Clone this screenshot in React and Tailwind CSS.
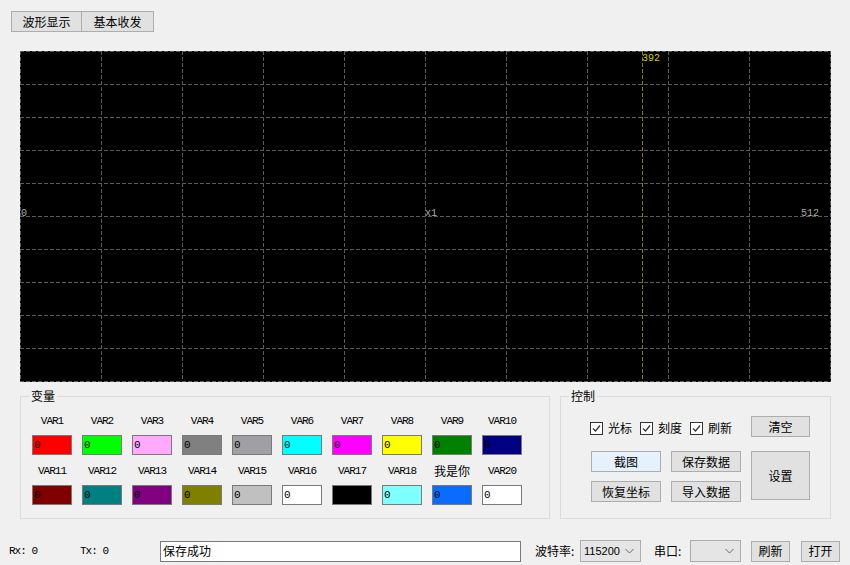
import React from 'react';

const CJK = "font-['Segoe_UI','Noto_Sans_CJK_SC',sans-serif]";
const MONO = "font-['Liberation_Mono','Noto_Sans_CJK_SC',monospace]";

const VARS = [
  [
    { label: 'VAR1', color: 'bg-[#ff0000]' },
    { label: 'VAR2', color: 'bg-[#00ff00]' },
    { label: 'VAR3', color: 'bg-[#ffaaff]' },
    { label: 'VAR4', color: 'bg-[#808080]' },
    { label: 'VAR5', color: 'bg-[#a0a0a4]' },
    { label: 'VAR6', color: 'bg-[#00ffff]' },
    { label: 'VAR7', color: 'bg-[#ff00ff]' },
    { label: 'VAR8', color: 'bg-[#ffff00]' },
    { label: 'VAR9', color: 'bg-[#008000]' },
    { label: 'VAR10', color: 'bg-[#000080]' },
  ],
  [
    { label: 'VAR11', color: 'bg-[#800000]' },
    { label: 'VAR12', color: 'bg-[#008080]' },
    { label: 'VAR13', color: 'bg-[#800080]' },
    { label: 'VAR14', color: 'bg-[#808000]' },
    { label: 'VAR15', color: 'bg-[#c0c0c0]' },
    { label: 'VAR16', color: 'bg-white' },
    { label: 'VAR17', color: 'bg-black' },
    { label: 'VAR18', color: 'bg-[#80ffff]' },
    { label: '我是你', color: 'bg-[#0a6cff]', cjk: true },
    { label: 'VAR20', color: 'bg-white' },
  ],
];

const Grid = () => {
  const xs = Array.from({ length: 11 }, (_, i) => 0.5 + i * 81);
  const ys = Array.from({ length: 11 }, (_, i) => 0.5 + i * 33);
  return (
    <svg width="811" height="331" className="block">
      {xs.map((x) => (
        <line key={'x' + x} x1={x} y1="0" x2={x} y2="331" stroke="#5a5a5a" strokeDasharray="4 2" />
      ))}
      {ys.map((y) => (
        <line key={'y' + y} x1="0" y1={y} x2="811" y2={y} stroke="#5a5a5a" strokeDasharray="4 2" />
      ))}
      <line x1="622.5" y1="0" x2="622.5" y2="331" stroke="#808000" strokeDasharray="4 2" />
      <g fontFamily="Liberation Mono, monospace" fontSize="10">
        <text x="1" y="165" fill="#a8a8a8">0</text>
        <text x="405" y="165" fill="#a8a8a8">x1</text>
        <text x="781" y="165" fill="#a8a8a8">512</text>
        <text x="622" y="10" fill="#d0d000">392</text>
      </g>
    </svg>
  );
};

const Btn = ({ children, className = '' }) => (
  <button className={`h-[21px] bg-[#e1e1e1] border border-[#adadad] text-[12px] text-black flex items-center justify-center ${CJK} ${className}`}>
    {children}
  </button>
);

const Check = ({ label }) => (
  <label className="flex items-center gap-[5px] mr-[8px]">
    <svg width="13" height="13" className="block">
      <rect x="0.5" y="0.5" width="12" height="12" fill="#fff" stroke="#333" />
      <path d="M3 6.5 L5.5 9 L10 3.5" fill="none" stroke="#333" strokeWidth="1.2" />
    </svg>
    <span className="text-[12px]">{label}</span>
  </label>
);

const Chevron = () => (
  <svg width="9" height="6" className="block shrink-0">
    <path d="M0.5 1 L4.5 5 L8.5 1" fill="none" stroke="#666" />
  </svg>
);

const Select = ({ value, className = '' }) => (
  <div className={`h-[22px] bg-[#e5e5e5] border border-[#adadad] flex items-center justify-between pl-[3px] pr-[6px] ${className}`}>
    <span className="font-['Liberation_Sans',sans-serif] text-[11px]">{value}</span>
    <Chevron />
  </div>
);

export default function App() {
  return (
    <div className={`w-[850px] h-[565px] bg-[#f0f0f0] overflow-hidden text-black ${CJK}`}>
      {/* Tabs */}
      <div className="flex pt-[11px] pl-[11px]">
        <div className="w-[71px] h-[21px] bg-[#e1e1e1] border border-[#adadad] flex items-center justify-center text-[12px]">波形显示</div>
        <div className="w-[72px] h-[21px] bg-[#e1e1e1] border border-l-0 border-[#adadad] flex items-center justify-center text-[12px]">基本收发</div>
      </div>

      {/* Scope */}
      <div className="mt-[19px] ml-[20px] w-[811px] h-[331px] bg-black">
        <Grid />
      </div>

      {/* Groups */}
      <div className="flex mt-[14px] ml-[20px] gap-[10px]">
        <div className="relative w-[530px] h-[123px] border border-[#dcdcdc] pt-[17px] pl-[6px]">
          <span className="absolute left-[8px] -top-[9px] px-[2px] bg-[#f0f0f0] text-[12px] leading-[16px]">变量</span>
          {VARS.map((row, r) => (
            <div key={r} className={`flex ${r === 1 ? 'mt-[9px]' : ''}`}>
              {row.map((v) => (
                <div key={v.label} className="w-[50px] flex flex-col items-center">
                  <div className={`h-[14px] leading-[14px] ${v.cjk ? 'text-[12px] ' + CJK : 'text-[11px] tracking-[-1px] ' + MONO}`}>{v.label}</div>
                  <div className={`mt-[7px] w-[40px] h-[20px] border border-[#7a7a7a] ${v.color} pl-[1px] text-[11px] leading-[18px] ${MONO}`}>
                    {v.label === 'VAR17' ? '' : '0'}
                  </div>
                </div>
              ))}
            </div>
          ))}
        </div>

        <div className="relative w-[271px] h-[123px] border border-[#dcdcdc] pt-[19px] pl-[30px]">
          <span className="absolute left-[8px] -top-[9px] px-[2px] bg-[#f0f0f0] text-[12px] leading-[16px]">控制</span>
          <div className="grid grid-cols-[70px_70px_59px] grid-rows-[26px_21px_21px] gap-x-[10px] gap-y-[9px]">
            <div className="col-span-2 flex items-center h-[21px] -ml-[1px] pt-[3px]">
              <Check label="光标" />
              <Check label="刻度" />
              <Check label="刷新" />
            </div>
            <Btn>清空</Btn>
            <Btn className="bg-[#e5f1fb] border-[#0078d7]">截图</Btn>
            <Btn>保存数据</Btn>
            <Btn className="row-span-2 h-[49px] self-start">设置</Btn>
            <Btn>恢复坐标</Btn>
            <Btn>导入数据</Btn>
          </div>
        </div>
      </div>

      {/* Status bar */}
      <div className="flex items-center mt-[21px] pl-[9px] h-[22px]">
        <span className={`w-[71px] text-[11px] tracking-[-1px] ${MONO}`}>Rx: 0</span>
        <span className={`w-[80px] text-[11px] tracking-[-1px] ${MONO}`}>Tx: 0</span>
        <div className="w-[361px] h-[21px] bg-white border border-[#7a7a7a] flex items-center pl-[2px] text-[12px]">保存成功</div>
        <span className="ml-[14px] w-[45px] text-[12px]">波特率:</span>
        <Select value="115200" className="w-[61px]" />
        <span className="ml-[13px] w-[36px] text-[12px]">串口:</span>
        <Select value="" className="w-[51px]" />
        <Btn className="ml-[10px] w-[39px]">刷新</Btn>
        <Btn className="ml-[11px] w-[39px]">打开</Btn>
      </div>
    </div>
  );
}
